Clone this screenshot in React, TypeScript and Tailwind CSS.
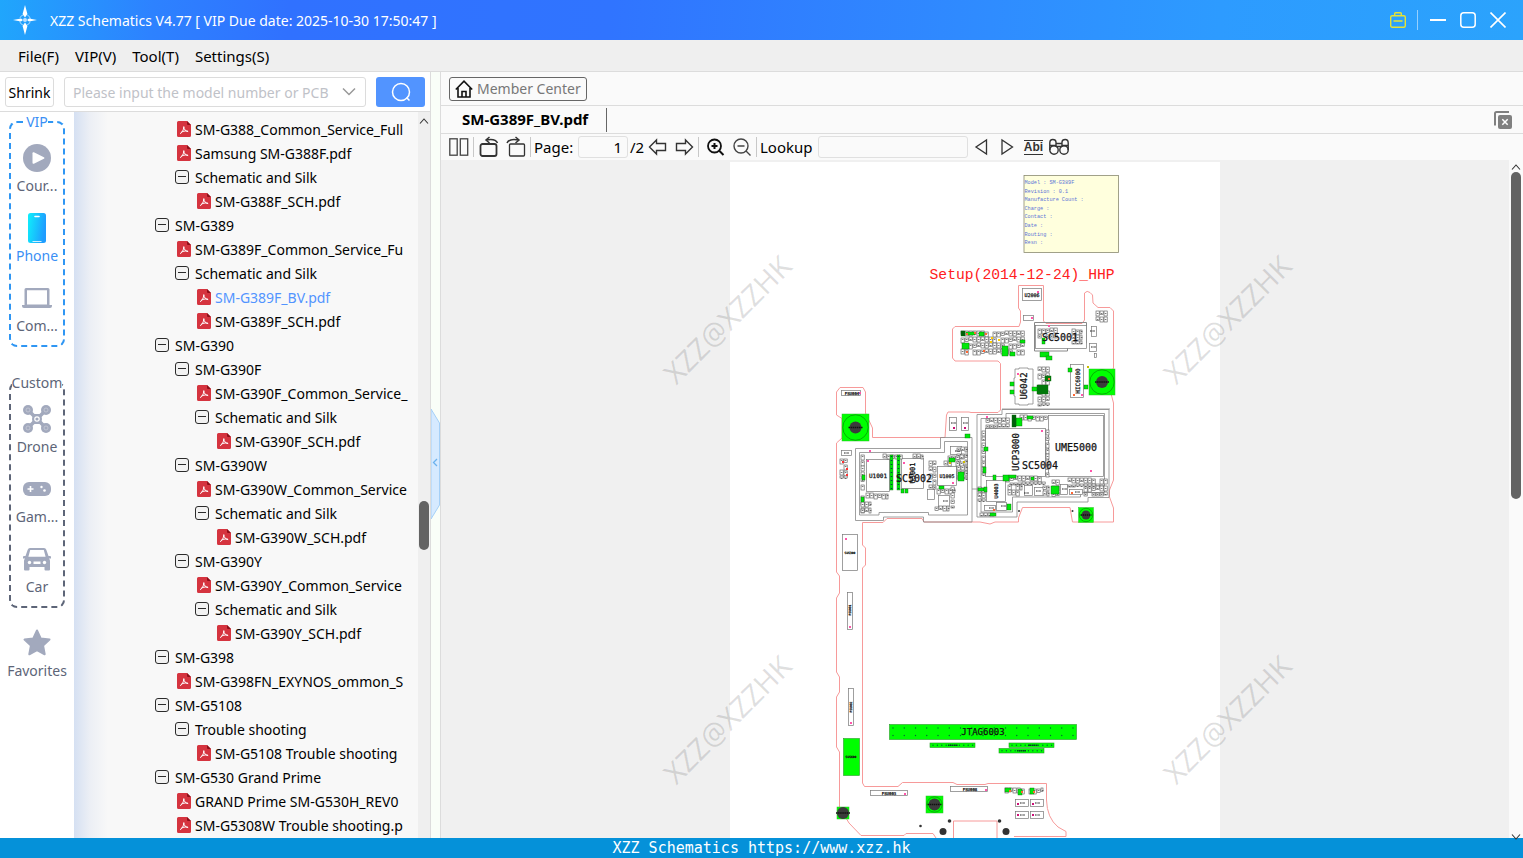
import React from "react";

type Kind = "dir" | "pdf";

interface TreeItem {
  level: number;
  kind: Kind;
  name: string;
  active?: boolean;
}

const tree: TreeItem[] = [
  { level: 1, kind: "pdf", name: "SM-G388_Common_Service_Full" },
  { level: 1, kind: "pdf", name: "Samsung SM-G388F.pdf" },
  { level: 1, kind: "dir", name: "Schematic and Silk" },
  { level: 2, kind: "pdf", name: "SM-G388F_SCH.pdf" },
  { level: 0, kind: "dir", name: "SM-G389" },
  { level: 1, kind: "pdf", name: "SM-G389F_Common_Service_Fu" },
  { level: 1, kind: "dir", name: "Schematic and Silk" },
  { level: 2, kind: "pdf", name: "SM-G389F_BV.pdf", active: true },
  { level: 2, kind: "pdf", name: "SM-G389F_SCH.pdf" },
  { level: 0, kind: "dir", name: "SM-G390" },
  { level: 1, kind: "dir", name: "SM-G390F" },
  { level: 2, kind: "pdf", name: "SM-G390F_Common_Service_" },
  { level: 2, kind: "dir", name: "Schematic and Silk" },
  { level: 3, kind: "pdf", name: "SM-G390F_SCH.pdf" },
  { level: 1, kind: "dir", name: "SM-G390W" },
  { level: 2, kind: "pdf", name: "SM-G390W_Common_Service" },
  { level: 2, kind: "dir", name: "Schematic and Silk" },
  { level: 3, kind: "pdf", name: "SM-G390W_SCH.pdf" },
  { level: 1, kind: "dir", name: "SM-G390Y" },
  { level: 2, kind: "pdf", name: "SM-G390Y_Common_Service" },
  { level: 2, kind: "dir", name: "Schematic and Silk" },
  { level: 3, kind: "pdf", name: "SM-G390Y_SCH.pdf" },
  { level: 0, kind: "dir", name: "SM-G398" },
  { level: 1, kind: "pdf", name: "SM-G398FN_EXYNOS_ommon_S" },
  { level: 0, kind: "dir", name: "SM-G5108" },
  { level: 1, kind: "dir", name: "Trouble shooting" },
  { level: 2, kind: "pdf", name: "SM-G5108 Trouble shooting" },
  { level: 0, kind: "dir", name: "SM-G530 Grand Prime" },
  { level: 1, kind: "pdf", name: "GRAND Prime SM-G530H_REV0" },
  { level: 1, kind: "pdf", name: "SM-G5308W Trouble shooting.p" },
];

const indents = ["pl-[81px]", "pl-[101px]", "pl-[121px]", "pl-[141px]"];

const PdfIcon = () => (
  <svg width="14" height="16" viewBox="0 0 14 16" className="ml-0.5">
    <path d="M1.500 0H10l4 4v10.500a1.500 1.500 0 0 1-1.500 1.500h-11A1.500 1.500 0 0 1 0 14.500v-13A1.500 1.500 0 0 1 1.500 0z" fill="#d5343f" />
    <path d="M10 0l4 4h-3a1 1 0 0 1-1-1z" fill="#8d0f19" />
    <path d="M3.500 12.500c1.600-.8 3-3 3.300-6.500M6.800 6c.3 2.600 1.800 4.300 4 4.600M4.200 11.200c1.600-1 3.800-1.400 6.200-1.200" fill="none" stroke="#fff" strokeWidth="1" strokeLinecap="round" />
  </svg>
);

const MinusBox = () => (
  <svg width="14" height="14" viewBox="0 0 14 14" fill="none" stroke="#2b2b2b">
    <rect x=".5" y=".5" width="13" height="13" rx="2.500" fill="#f2f2f2" />
    <path d="M3 6.500h8" />
  </svg>
);

const CourseIcon = () => (
  <svg width="28" height="28" viewBox="0 0 28 28">
    <circle cx="14" cy="14" r="14" fill="#a2a9bd" />
    <path d="M9.500 9.200a1 1 0 0 1 1.400-.9l10 4.900a.9.900 0 0 1 0 1.600l-10 4.900a1 1 0 0 1-1.400-.9z" fill="#fff" />
  </svg>
);

const PhoneIcon = () => (
  <svg width="28" height="30" viewBox="0 0 28 30">
    <defs>
      <linearGradient id="phone" x1="0" x2="1" y1="0" y2=".25">
        <stop offset="0" stopColor="#0ff0fb" />
        <stop offset="1" stopColor="#1f9dff" />
      </linearGradient>
    </defs>
    <rect x="5" y="0" width="18" height="30" rx="2.500" fill="url(#phone)" />
    <path d="M12 3.500h4" stroke="#fff" strokeWidth="1.600" strokeLinecap="round" />
    <path d="M9.500 28.500h9" stroke="#fff" strokeWidth=".8" />
  </svg>
);

const ComputerIcon = () => (
  <svg width="30" height="20" viewBox="0 0 30 20">
    <path d="M2.500 1.500A1.500 1.500 0 0 1 4 0h22a1.500 1.500 0 0 1 1.500 1.500V17H30v1a2 2 0 0 1-2 2H2a2 2 0 0 1-2-2v-1h2.500zM5 2.300V16.500h20V2.300z" fill="#a2a9bd" fillRule="evenodd" />
  </svg>
);

const DroneIcon = () => (
  <svg width="28" height="28" viewBox="0 0 28 28">
    <path d="M5 5l18 18M23 5L5 23" stroke="#a2a9bd" strokeWidth="3.600" />
    <path d="M10 9h8l1 5-1 5h-8l-1-5z" fill="#a2a9bd" />
    {[[5, 5], [23, 5], [5, 23], [23, 23]].map(([x, y]) => (
      <g key={`${x}-${y}`}>
        <circle cx={x} cy={y} r="5" fill="#a2a9bd" />
        <circle cx={x} cy={y} r="2" fill="#a2a9bd" stroke="#c6cad6" strokeWidth=".8" />
      </g>
    ))}
    <circle cx="14" cy="14" r="2.200" fill="#a2a9bd" stroke="#fff" strokeWidth="1.200" />
  </svg>
);

const GameIcon = () => (
  <svg width="28" height="14" viewBox="0 0 28 14">
    <rect width="28" height="14" rx="6" fill="#a2a9bd" />
    <path d="M7.500 4v6M4.500 7h6" stroke="#fff" strokeWidth="1.600" />
    <circle cx="18.500" cy="5" r="1.200" fill="#fff" />
    <circle cx="21.500" cy="8.500" r="1.300" fill="#fff" />
  </svg>
);

const CarIcon = () => (
  <svg width="28" height="23" viewBox="0 0 28 23">
    <path d="M7 0h14a2.500 2.500 0 0 1 2.300 1.700L25.500 8H27a1 1 0 0 1 1 1v1.500h-2c.7.700 1 1.600 1 2.500v8.500a1 1 0 0 1-1 1h-3.500a1 1 0 0 1-1-1V19h-15v2.500a1 1 0 0 1-1 1H2a1 1 0 0 1-1-1V13c0-.9.300-1.800 1-2.500H0V9a1 1 0 0 1 1-1h1.500l2.200-6.300A2.500 2.500 0 0 1 7 0zM7.200 2L5.400 8.800h17.200L20.800 2z" fill="#a2a9bd" fillRule="evenodd" />
    <circle cx="6.500" cy="14.500" r="1.700" fill="#fff" />
    <circle cx="21.500" cy="14.500" r="1.700" fill="#fff" />
    <rect x="10.500" y="13.500" width="7" height="2.500" fill="#fff" />
  </svg>
);

const StarIcon = () => (
  <svg width="28" height="28" viewBox="0 0 28 28">
    <path d="M14 1.500l3.700 8 8.800 1.100-6.400 6 1.600 8.700-7.700-4.200-7.700 4.200 1.600-8.700-6.400-6 8.800-1.100z" fill="#a2a9bd" stroke="#a2a9bd" strokeWidth="2" strokeLinejoin="round" />
  </svg>
);

interface NavButtonProps {
  label: string;
  icon: React.ReactNode;
  active?: boolean;
}

const NavButton: React.FC<NavButtonProps> = ({ label, icon, active }) => (
  <button className={`flex h-[70px] w-full flex-col items-center text-[14px] leading-5 ${active ? "text-[#3a8ff5]" : "text-[#5d6578]"}`}>
    <span className="flex h-9 items-center justify-center">{icon}</span>
    <span className="whitespace-nowrap">{label}</span>
  </button>
);

const Logo = () => (
  <svg width="24" height="30" viewBox="0 0 24 30">
    <circle cx="12" cy="15" r="5.500" fill="none" stroke="#fff" strokeWidth="1" strokeDasharray="5 3.600" strokeDashoffset="-1.800" opacity=".6" />
    <path d="M12 0l2.400 9L12 12.500 9.600 9zM12 30l2.400-9L12 17.500 9.600 21z" fill="#fff" />
    <path d="M0 15l8-1.600 2 1.600-2 1.600zM24 15l-8-1.600-2 1.600 2 1.600z" fill="#fff" />
    <circle cx="12" cy="15" r="2" fill="#bfe0ff" />
  </svg>
);

const TitleBar = () => (
  <header className="flex h-10 shrink-0 items-center bg-[linear-gradient(95deg,#20a6fc_0%,#2d82ff_10%,#3071ff_19%,#3074ff_40%,#2f8cff_65%,#2d9bff_80%,#2ba3fc_100%)] pl-[13px] pr-[17px] text-white">
    <Logo />
    <h1 className="ml-[13px] text-[14px]">XZZ Schematics V4.77 [ VIP Due date: 2025-10-30 17:50:47 ]</h1>
    <div className="ml-auto flex items-center">
      <button aria-label="VIP">
        <svg width="16" height="16" viewBox="0 0 16 16" fill="none" stroke="#e6e335" strokeWidth="1.400">
          <rect x=".7" y="3.700" width="14.600" height="11.600" rx="1.500" />
          <path d="M4.700 3.700V1.500q0-.8.800-.8h5q.8 0 .8.800v2.200M3.500 9h9" />
        </svg>
      </button>
      <span className="ml-[11px] h-5 w-px bg-white/50" />
      <button aria-label="Minimize" className="ml-3">
        <svg width="16" height="16" stroke="#fff" strokeWidth="2"><path d="M0 8h16" /></svg>
      </button>
      <button aria-label="Maximize" className="ml-[14px]">
        <svg width="16" height="16" fill="none" stroke="#fff" strokeWidth="1.500"><rect x=".8" y=".8" width="14.400" height="14.400" rx="3" /></svg>
      </button>
      <button aria-label="Close" className="ml-[14px]">
        <svg width="16" height="16" stroke="#fff" strokeWidth="1.600"><path d="M.5.500l15 15M15.500.500l-15 15" /></svg>
      </button>
    </div>
  </header>
);

const MenuBar = () => (
  <nav className="flex h-8 shrink-0 items-center gap-4 border-b border-[#dcdcdc] bg-[#efefef] px-[18px] pt-0.5 text-[15px]">
    <button>File(F)</button>
    <button>VIP(V)</button>
    <button>Tool(T)</button>
    <button>Settings(S)</button>
  </nav>
);

const SearchBar = () => (
  <div className="flex h-10 shrink-0 items-center border-b border-[#dcdcdc] bg-white px-[5px] pt-px">
    <button className="h-[30px] w-[49px] rounded-[3px] border border-[#dcdcdc] text-[14px]">Shrink</button>
    <div className="ml-[10px] flex h-[30px] min-w-0 flex-1 items-center rounded-[3px] border border-[#dcdcdc] px-2">
      <input aria-label="Model number" placeholder="Please input the model number or PCB" className="min-w-0 flex-1 text-[14px] outline-none placeholder:text-[#bfc2c8]" />
      <button aria-label="History">
        <svg width="16" height="16" fill="none" stroke="#999" strokeWidth="1.500"><path d="M2 4.500l6 6 6-6" /></svg>
      </button>
    </div>
    <button aria-label="Search" className="ml-[10px] flex h-[30px] w-[49px] items-center justify-center rounded-[3px] bg-[#5294ff]">
      <svg width="20" height="20" fill="none" stroke="#fff" strokeWidth="1.500"><circle cx="10" cy="10" r="8.500" /><path d="M15.500 15.500l3 3" /></svg>
    </button>
  </div>
);

const SideNav = () => (
  <nav className="w-[74px] shrink-0 bg-white px-[9px]">
    <fieldset className="h-[235px] min-w-0 rounded-lg border-2 border-dashed border-[#2f96f3]">
      <legend className="mx-auto text-[14px] leading-5 text-[#3a8ff5]">VIP</legend>
      <div className="pt-2">
        <NavButton label="Cour..." icon={<CourseIcon />} />
        <NavButton label="Phone" icon={<PhoneIcon />} active />
        <NavButton label="Com..." icon={<ComputerIcon />} />
      </div>
    </fieldset>
    <fieldset className="mt-[26px] h-[235px] min-w-0 rounded-lg border-2 border-dashed border-[#5d6578]">
      <legend className="mx-auto text-[14px] leading-5 text-[#5d6578]">Custom</legend>
      <div className="pt-2">
        <NavButton label="Drone" icon={<DroneIcon />} />
        <NavButton label="Gam..." icon={<GameIcon />} />
        <NavButton label="Car" icon={<CarIcon />} />
      </div>
    </fieldset>
    <div className="pt-[17px]">
      <NavButton label="Favorites" icon={<StarIcon />} />
    </div>
  </nav>
);

const FileTree = () => (
  <div className="min-w-0 flex-1 overflow-hidden bg-[linear-gradient(90deg,#d5e0f2_0,#eceff5_16px,#f8f8f8_34px)] pr-1 pt-[5px]">
    <ul className="text-[14px]">
      {tree.map((item, i) => (
        <li key={i} className={`flex h-6 items-center ${indents[item.level]}`}>
          <span className="flex w-5 shrink-0 items-center">{item.kind === "pdf" ? <PdfIcon /> : <MinusBox />}</span>
          <button className={`min-w-0 whitespace-nowrap text-left ${item.active ? "text-[#5294ff]" : "text-black"}`}>{item.name}</button>
        </li>
      ))}
    </ul>
  </div>
);

const Caret: React.FC<{ down?: boolean }> = ({ down }) => (
  <svg width="10" height="10" fill="none" stroke="#333" strokeWidth="1.100" className={down ? "rotate-180" : ""}>
    <path d="M1 7.500l4-4.500 4 4.500" />
  </svg>
);

const Sep = () => <span className="ml-1 h-5 w-px shrink-0 bg-[#c8c8c8]" />;

const Toolbar = () => (
  <div className="flex h-[26px] shrink-0 items-center bg-[#fafafa] pl-2 text-[15px] text-black">
    <button aria-label="Two pages">
      <svg width="20" height="18" fill="none" stroke="#444" strokeWidth="1.300"><rect x=".8" y=".8" width="7.400" height="16.400" /><rect x="11.300" y=".8" width="7.400" height="16.400" /></svg>
    </button>
    <Sep />
    <button aria-label="Rotate left" className="ml-[5px]">
      <svg width="20" height="22" fill="none" stroke="#333" strokeWidth="1.800"><rect x="1.500" y="8" width="16" height="12" rx="2" /><path d="M18.500 7C17 3.500 13 2.800 7 4M10.500 1L7 4l3.500 3" strokeWidth="1.500" /></svg>
    </button>
    <button aria-label="Rotate right" className="ml-[7px]">
      <svg width="20" height="22" fill="none" stroke="#333" strokeWidth="1.800"><rect x="3.500" y="8" width="15" height="12" rx="1" strokeWidth="1.300" /><path d="M1 7C2.500 3.500 7 2.800 13 4M9.500 1L13 4 9.500 7" strokeWidth="1.500" /></svg>
    </button>
    <Sep />
    <label htmlFor="page" className="ml-[3px] w-11">Page:</label>
    <input id="page" defaultValue="1" className="h-[22px] w-[50px] rounded-[3px] border border-[#e0e0e0] pr-[5px] text-right outline-none" />
    <span className="ml-0.5 w-[18px]">/2</span>
    <button aria-label="Previous page">
      <svg width="20" height="18" fill="none" stroke="#333" strokeWidth="1.400"><path d="M1.500 9l7-7v3.500h9v7h-9V16z" /></svg>
    </button>
    <button aria-label="Next page" className="ml-[6px]">
      <svg width="20" height="18" fill="none" stroke="#333" strokeWidth="1.400"><path d="M18.500 9l-7-7v3.500h-9v7h9V16z" /></svg>
    </button>
    <Sep />
    <button aria-label="Zoom in" className="ml-[7px]">
      <svg width="20" height="20" fill="none" stroke="#111" strokeWidth="1.800"><circle cx="8.500" cy="9" r="6.500" /><path d="M13 13.500l4.500 4.500M5.500 9h6M8.500 6v6" strokeWidth="2" /></svg>
    </button>
    <button aria-label="Zoom out" className="ml-[6px]">
      <svg width="20" height="20" fill="none" stroke="#444" strokeWidth="1.400"><circle cx="9" cy="9" r="7" /><path d="M14 14l4.500 4.500M5.500 9h7" /></svg>
    </button>
    <Sep />
    <label htmlFor="lookup" className="ml-[3px] w-[58px]">Lookup</label>
    <input id="lookup" className="h-[22px] w-[150px] rounded-[3px] border border-[#e0e0e0] px-1 outline-none" />
    <button aria-label="Find previous" className="ml-[6px]">
      <svg width="14" height="18" fill="none" stroke="#333" strokeWidth="1.300"><path d="M12.500 2v14L2 9z" /></svg>
    </button>
    <button aria-label="Find next" className="ml-3">
      <svg width="14" height="18" fill="none" stroke="#333" strokeWidth="1.300"><path d="M2 2v14l10.500-7z" /></svg>
    </button>
    <button aria-label="Whole word" className="ml-[10px] flex h-[15px] w-[19px] items-center justify-center border-y border-[#333] text-[12px] font-bold leading-[13px] text-[#333] font-['Liberation_Sans',sans-serif]">Abi</button>
    <button aria-label="Find all" className="ml-[6px]">
      <svg width="20" height="20" fill="none" stroke="#333" strokeWidth="1.400">
        <circle cx="5" cy="13" r="4.200" /><circle cx="15" cy="13" r="4.200" />
        <path d="M.8 13V6q0-3.500 3-3.500T7 5v5M19.200 13V6q0-3.500-3-3.500T13 5v5M7 6.500h6M7 9.500h6M1 8.500h6M13 8.500h6" />
      </svg>
    </button>
  </div>
);

type Box = [number, number, number, number];

// Outline-only parts: chips, connectors, coils
const parts: Box[] = [
  [1022, 288, 20, 13], [1023, 315, 11, 6], [1035, 325, 52, 24], [1091, 326, 6, 11], [1089, 343, 8, 9],
  [1094, 353, 3, 5], [1070, 364, 14, 34], [841, 390, 20, 6], [949, 417, 8, 14], [961, 417, 8, 14],
  [866, 459, 24, 33], [901, 458, 23, 31], [937, 466, 20, 20], [938, 495, 12, 12], [950, 446, 12, 9],
  [841, 450, 11, 6], [842, 534, 16, 37], [847, 592, 6, 38], [848, 688, 6, 38], [870, 790, 38, 6],
  [950, 786, 38, 6], [1015, 799, 14, 8], [1030, 799, 14, 8], [1015, 811, 14, 8], [1030, 811, 14, 8],
  [985, 428, 61, 49], [1048, 415, 56, 62], [986, 480, 20, 22], [1024, 485, 9, 11], [1034, 487, 10, 9],
  [984, 505, 12, 6], [996, 502, 11, 9], [1060, 484, 8, 11], [1069, 489, 14, 6], [927, 489, 8, 11],
];

// Areas packed with tiny resistors and capacitors
const clusters: Box[] = [
  [961, 331, 65, 24], [861, 454, 4, 60], [883, 454, 20, 4], [929, 461, 7, 27], [957, 447, 10, 32],
  [944, 455, 20, 10], [866, 493, 22, 5], [861, 502, 10, 12], [840, 458, 8, 20], [937, 488, 18, 6],
  [951, 487, 5, 20], [1038, 367, 13, 38], [1038, 328, 20, 9], [1072, 329, 10, 15], [1096, 311, 12, 12],
  [986, 418, 24, 9], [982, 425, 4, 50], [1020, 415, 28, 5], [1046, 430, 3, 46], [1006, 476, 40, 8],
  [1008, 484, 14, 12], [1052, 480, 8, 16], [1068, 478, 40, 8], [1084, 486, 24, 9], [978, 487, 8, 14],
  [1005, 788, 38, 7], [935, 506, 14, 5], [1043, 485, 6, 10], [913, 454, 10, 4], [980, 513, 14, 3],
];

const greens: Box[] = [
  [966, 332, 9, 3], [962, 343, 7, 6], [979, 332, 5, 4], [1002, 346, 6, 10], [1010, 352, 5, 4], [1020, 340, 5, 3],
  [1040, 352, 9, 5], [1046, 356, 6, 4], [890, 455, 3, 35], [897, 455, 3, 35], [901, 489, 3, 4], [905, 489, 3, 4],
  [862, 475, 3, 5], [861, 497, 3, 5], [958, 472, 6, 9], [965, 434, 5, 4], [949, 458, 6, 4], [939, 486, 5, 3],
  [1016, 418, 6, 8], [1027, 416, 6, 3], [984, 447, 4, 4], [983, 467, 3, 6], [1003, 475, 6, 6], [1009, 475, 7, 3],
  [978, 488, 6, 3], [984, 487, 3, 5], [1007, 504, 4, 6], [990, 513, 6, 3], [1051, 486, 8, 8], [1031, 477, 3, 3],
  [993, 475, 3, 5], [1010, 382, 4, 4], [1010, 390, 4, 4], [1032, 387, 6, 4], [1068, 368, 4, 4], [1084, 385, 4, 4],
  [1005, 788, 6, 4], [1018, 789, 4, 6], [1030, 788, 4, 6], [1042, 338, 3, 6],
];

const accents: [number, number, string][] = [
  [1037, 291, "#f5a"], [859, 392, "#f5a"], [1031, 317, "#f5a"], [869, 450, "#f5a"], [867, 460, "#f5a"], [903, 462, "#f5a"],
  [952, 482, "#f5a"], [845, 538, "#f5a"], [849, 626, "#f5a"], [850, 722, "#f5a"], [904, 793, "#f5a"], [985, 789, "#f5a"],
  [1017, 803, "#c17"], [1032, 803, "#c17"], [1017, 814, "#c17"], [1032, 814, "#c17"], [1041, 430, "#f5a"], [1090, 470, "#f5a"],
  [986, 416, "#f5a"], [1048, 325, "#f5a"], [953, 427, "#c17"], [964, 427, "#c17"], [966, 333, "#f63"], [974, 332, "#f63"],
  [985, 333, "#f63"], [966, 351, "#f63"], [983, 350, "#f63"], [991, 337, "#fc0"], [998, 339, "#fc0"], [990, 341, "#fc0"],
  [949, 462, "#cb0"], [963, 461, "#cb0"], [1087, 366, "#cb0"], [842, 461, "#f33"], [846, 468, "#f33"], [846, 474, "#f33"],
  [993, 509, "#f63"], [1071, 492, "#f63"], [1009, 790, "#f63"], [1021, 791, "#f63"], [1033, 791, "#f63"], [1048, 378, "#f63"],
  [1073, 394, "#f63"], [1081, 394, "#f5a"], [1017, 373, "#f5a"],
];

const Cluster: React.FC<{ box: Box; seed: number }> = ({ box, seed }) => {
  const [x, y, w, h] = box;
  const cells: React.ReactNode[] = [];
  for (let r = 0; r * 6 < h; r++) {
    for (let c = 0; c * 4 < w; c++) {
      const k = (r * 7 + c * 13 + seed * 5) % 11;
      if (k === 3 && w * h > 150) continue;
      const ch = Math.min(k % 3 === 0 ? 3.5 : 5, h - r * 6);
      const cw = Math.min(3.2, w - c * 4);
      if (ch < 1.5 || cw < 1.5) continue;
      cells.push(<rect key={`${r}-${c}`} x={x + c * 4} y={y + r * 6 + (k % 2)} width={cw} height={ch} />);
      cells.push(<path key={`m${r}-${c}`} d={`M${x + c * 4 + 0.8} ${y + r * 6 + 2.5}h1.600`} stroke="#222" />);
    }
  }
  return <g>{cells}</g>;
};

interface PadProps {
  x: number;
  y: number;
  size: number;
  r: number;
}

const ScrewPad: React.FC<PadProps> = ({ x, y, size, r }) => (
  <g>
    <rect x={x - size / 2} y={y - size / 2} width={size} height={size} fill="#00ff00" stroke="#3b3" strokeWidth=".5" />
    <circle cx={x} cy={y} r={size / 2 - 0.8} fill="none" stroke="#077a07" strokeWidth=".6" />
    <circle cx={x} cy={y} r={r} fill="#3b3b3b" />
    <path d={`M${x - r - 1} ${y}h${r * 2 + 2}`} stroke="#111" strokeWidth="1.500" strokeDasharray="1.500 .6" />
  </g>
);

const labels: { t: string; x: number; y: number; s: number; v?: boolean }[] = [
  { t: "SC5001", x: 1060, y: 341, s: 10 },
  { t: "U6042", x: 1027, y: 386, s: 9, v: true },
  { t: "HIC6000", x: 1080, y: 381, s: 6, v: true },
  { t: "U2006", x: 1032, y: 297, s: 5 },
  { t: "UCP3000", x: 1019, y: 452, s: 9, v: true },
  { t: "UME5000", x: 1076, y: 451, s: 10 },
  { t: "SC5004", x: 1040, y: 469, s: 10 },
  { t: "SC5002", x: 914, y: 482, s: 10 },
  { t: "U1001", x: 878, y: 478, s: 6 },
  { t: "U3001", x: 915, y: 473, s: 7, v: true },
  { t: "U1005", x: 947, y: 478, s: 5 },
  { t: "U4003", x: 998, y: 491, s: 5, v: true },
  { t: "JTAG6003", x: 983, y: 735, s: 9 },
  { t: "FSU004", x: 852, y: 395, s: 4 },
  { t: "SUS300", x: 850, y: 554, s: 3 },
  { t: "FSU001", x: 851, y: 610, s: 3, v: true },
  { t: "FSU002", x: 852, y: 707, s: 3, v: true },
  { t: "FSU003", x: 889, y: 795, s: 4 },
  { t: "FSU008", x: 970, y: 791, s: 4 },
  { t: "SUS600", x: 851, y: 758, s: 3 },
];

const info = ["Model : SM-G389F", "Revision : 0.1", "Manufacture Count :", "Charge :", "Contact :", "Date :", "Routing :", "Resn :"];

const dots = (x: number, y: number, n: number, gap: number) =>
  Array.from({ length: n }, (_, i) => <circle key={`${x}-${y}-${i}`} cx={x + i * gap} cy={y} r=".7" fill="#063" />);

const BoardView = () => (
  <svg viewBox="730 162 490 676" className="h-[676px] w-[490px] shrink-0 overflow-visible bg-white" role="img" aria-label="Board view">
    <rect x="1024" y="175.500" width="94.500" height="77" fill="#ffffdd" stroke="#8a8a70" strokeWidth=".8" />
    {info.map((line, i) => (
      <text key={line} x="1024.500" y={184 + i * 8.6} fontSize="5.200" fill="#5c74d8" fontFamily="Liberation Mono, monospace">{line}</text>
    ))}
    <text x="929.500" y="279" fontSize="14.700" fill="#ff2020" fontFamily="Liberation Mono, monospace">Setup(2014-12-24)_HHP</text>

    {/* Board edge */}
    <g fill="none" stroke="#f79a9a" strokeWidth="1">
      <path d="M1018.500 285.500H1043.500V321L1046 323.500H1082L1084.500 320V293Q1087 290 1090 292.500L1092.500 295 1093 303 1098 307.500H1110L1113.500 311V368Q1109 374 1110 385T1113.500 403V480L1109.500 490V497L1113.500 508V522H1072.500L1070 507.500H1022.500L1018.500 518V522H995L990 524 980 522H924L922 518.500H887L883 522.500H862.500V545L865.500 548V565L862.500 568V783L864.500 786.500H898L902.500 782.500H953L957 784.500H985L988 783.500H1046.500V800Q1047 818 1058 827L1066 831.500V836.500H1014" />
      <path d="M1018.500 285.500V308L1020.500 311V322L1019 326.500H955L952.500 329V358L955 361H998L1000.500 363.500V410L998 412.500H971L969 412H948L946.500 415 945 437.500H872.500V428L865.500 413V392L863 387.500H840L836.500 392V415L842 418.500V438L836.500 443V572L839.500 576V593L836.500 598V672L839.500 677V692L836.500 697V747L839.500 752V807L849 823 861 835.500H904L906 833.500H933L936 838" />
      <path d="M953.500 838V821H997V838" />
    </g>

    {/* Shield cans */}
    <g fill="none" stroke="#888" strokeWidth=".8">
      <path d="M855.500 448.500H940.500V437.500H972V522H923.500V517H883.500V520.500H855.500zM859.500 452.500H944.500V441.500H967.500V515H928.500V512.500H879V515H859.500z" />
      <path d="M977 414.500H1002V409.500H1109V497.500H1088V502H1017V517H977zM981 418.500H1006V413.500H1104.500V492.500H1080.500V497H1012.500V512H981z" />
      <path d="M1034.500 322.500H1086.500V343H1067.500V351H1034.500z" strokeWidth="1" />
      <path d="M1015 369h4v-1h9v1h5v35h-5v1h-9v-1h-4v-8h-1v-18h1z" />
      <path d="M1002 409h108M972 489h12M1038 327h25v19h-25z" />
    </g>
    <g fill="#fff" stroke="#777" strokeWidth=".7">
      {parts.map(([x, y, w, h]) => <rect key={`${x}-${y}`} x={x + 0.5} y={y + 0.5} width={w - 1} height={h - 1} />)}
    </g>
    <g fill="#fff" stroke="#555" strokeWidth=".6">
      {clusters.map((box, i) => <Cluster key={i} box={box} seed={i} />)}
    </g>
    <g fill="#00e80a" stroke="#0a6b0a" strokeWidth=".4">
      {greens.map(([x, y, w, h]) => <rect key={`${x}-${y}`} x={x} y={y} width={w} height={h} />)}
      <rect x="1037" y="385" width="11" height="9" fill="#00780a" />
      <rect x="1045" y="376" width="6" height="5" fill="#00780a" />
      <rect x="961" y="331" width="4" height="5" fill="#00600a" />
      <rect x="1012" y="415" width="4" height="12" fill="#00600a" />
    </g>
    <path d="M891.500 456v33M898.500 456v33" stroke="#044" strokeWidth="1.400" strokeDasharray="1 3" />
    {[[1025, 493], [1037, 491], [1063, 489], [1091, 331], [1092, 347], [952, 423], [964, 423], [845, 453], [944, 501], [956, 451], [1002, 506], [990, 508], [1076, 492], [1021, 803], [1036, 803], [1021, 815], [1036, 815]].map(([x, y]) => (
      <path key={`${x}-${y}`} d={`M${x - 1} ${y}h5`} stroke="#222" strokeWidth="1.200" strokeDasharray="1 .4" />
    ))}
    {accents.map(([x, y, c]) => <rect key={`${x}-${y}`} x={x} y={y} width="2" height="2" fill={c} />)}

    <ScrewPad x={1102} y={382} size={26} r={6} />
    <ScrewPad x={855.5} y={427.5} size={27} r={6} />
    <ScrewPad x={1086} y={515} size={15} r={4.5} />
    <ScrewPad x={934.5} y={804.5} size={17} r={6} />
    <ScrewPad x={843} y={813} size={12} r={6} />
    {[[943, 831.5, 3.5], [1006, 831.5, 3.5], [949.5, 821, 1.8], [999.5, 821, 1.8], [920.5, 826, 1.3], [1019, 511, 1], [1072.5, 511, 1]].map(([x, y, r]) => (
      <circle key={x} cx={x} cy={y} r={r} fill="#333" />
    ))}

    <g fill="#00ff00" stroke="#2a9a2a" strokeWidth=".6">
      <rect x="889.500" y="724.500" width="187" height="15" />
      <rect x="930" y="743" width="45" height="4.500" />
      <rect x="1009" y="743" width="45" height="4.500" />
      <rect x="999" y="748.500" width="45" height="4.500" />
      <rect x="843.500" y="738.500" width="16" height="37" />
    </g>
    {dots(893, 728, 17, 11.25)}
    {dots(893, 735.5, 17, 11.25)}
    {dots(933, 745.2, 10, 4.4)}
    {dots(1012, 745.2, 10, 4.4)}
    {dots(1002, 750.7, 10, 4.4)}
    <path d="M948 745.200h10M1028 745.200h10M1017 750.700h9" stroke="#042" strokeWidth="1.500" strokeDasharray="1.500 .4" />

    <g fill="#111" stroke="#111" strokeWidth=".25" fontFamily="DejaVu Sans Mono, monospace" textAnchor="middle">
      {labels.map((l) => (
        <text key={l.t} x={l.x} y={l.y} fontSize={l.s} transform={l.v ? `rotate(-90 ${l.x} ${l.y})` : undefined}>{l.t}</text>
      ))}
    </g>

    <g fill="#000" fillOpacity=".12" fontFamily="Noto Sans, sans-serif" fontSize="29" textAnchor="middle">
      {[[735, 327], [1235, 327], [735, 727], [1235, 727]].map(([x, y]) => (
        <text key={`${x}-${y}`} x={x} y={y} transform={`rotate(-45 ${x} ${y})`}>XZZ@XZZHK</text>
      ))}
    </g>
  </svg>
);

const Viewer = () => (
  <section className="flex min-w-0 flex-1 flex-col bg-[#fafafa]">
    <div className="flex h-[34px] shrink-0 items-center border-b border-[#dcdcdc] pl-2">
      <button className="flex h-6 items-center rounded-[3px] border border-[#666] px-[5px] text-[14px] text-[#777]">
        <svg width="18" height="18" fill="none" stroke="#111" strokeWidth="1.600" className="mr-1"><path d="M.8 9.500L9 1.200l8.200 8.300M3 8v9h12V8M7 17v-5.500h4V17" /></svg>
        Member Center
      </button>
    </div>
    <div className="flex h-7 shrink-0 items-center border-b border-[#dcdcdc] pr-[11px]">
      <button className="flex h-6 items-center border-r border-[#666] pl-[21px] pr-[18px] text-[15px] font-bold text-black">SM-G389F_BV.pdf</button>
      <button aria-label="Close all" className="ml-auto">
        <svg width="18" height="18" viewBox="0 0 18 18">
          <path d="M1 14.500V2.500Q1 1 2.500 1H15" fill="none" stroke="#808080" strokeWidth="2" />
          <rect x="4" y="4" width="14" height="14" rx="2" fill="#808080" />
          <path d="M8.300 8.300l5.400 5.400M13.700 8.300l-5.400 5.400" stroke="#fff" strokeWidth="1.500" />
        </svg>
      </button>
    </div>
    <Toolbar />
    <div className="flex min-h-0 flex-1 bg-[#f0f0f0]">
      <div className="flex min-w-0 flex-1 justify-center overflow-hidden pt-0.5">
        <BoardView />
      </div>
      <div className="flex w-[14px] shrink-0 flex-col items-center bg-[#fafafa] pt-0.5">
        <Caret />
        <div className="h-[327px] w-[10px] rounded-full bg-[#636363]" />
        <div className="mt-auto h-1.5"><Caret down /></div>
      </div>
    </div>
  </section>
);

export default function App() {
  return (
    <div className="flex h-screen flex-col overflow-hidden bg-white text-black font-['Noto_Sans',sans-serif]">
      <TitleBar />
      <MenuBar />
      <main className="flex min-h-0 flex-1">
        <section className="flex w-[430px] shrink-0 flex-col">
          <SearchBar />
          <div className="flex min-h-0 flex-1">
            <SideNav />
            <FileTree />
            <div className="flex w-3 shrink-0 flex-col items-center bg-[#efefef] pt-1">
              <Caret />
              <div className="mt-[375px] h-[49px] w-[10px] rounded-full bg-[#636363]" />
            </div>
          </div>
        </section>
        <div className="flex w-[11px] shrink-0 items-center border-x border-[#dcdcdc] bg-[#f9fef8]">
          <button aria-label="Collapse panel" className="mt-[18px]">
            <svg width="9" height="112" viewBox="0 0 9 112">
              <path d="M0 1l8.500 14v82L0 111z" fill="#d6eaff" stroke="#a5d0f7" />
              <path d="M6 51l-3.500 3.500L6 58" fill="none" stroke="#6cb2ee" strokeWidth="1.300" />
            </svg>
          </button>
        </div>
        <Viewer />
      </main>
      <footer className="flex h-5 shrink-0 items-center justify-center bg-[#0591d9] text-[15px] leading-5 text-white font-['DejaVu_Sans_Mono',monospace]">
        XZZ Schematics https://www.xzz.hk
      </footer>
    </div>
  );
}
